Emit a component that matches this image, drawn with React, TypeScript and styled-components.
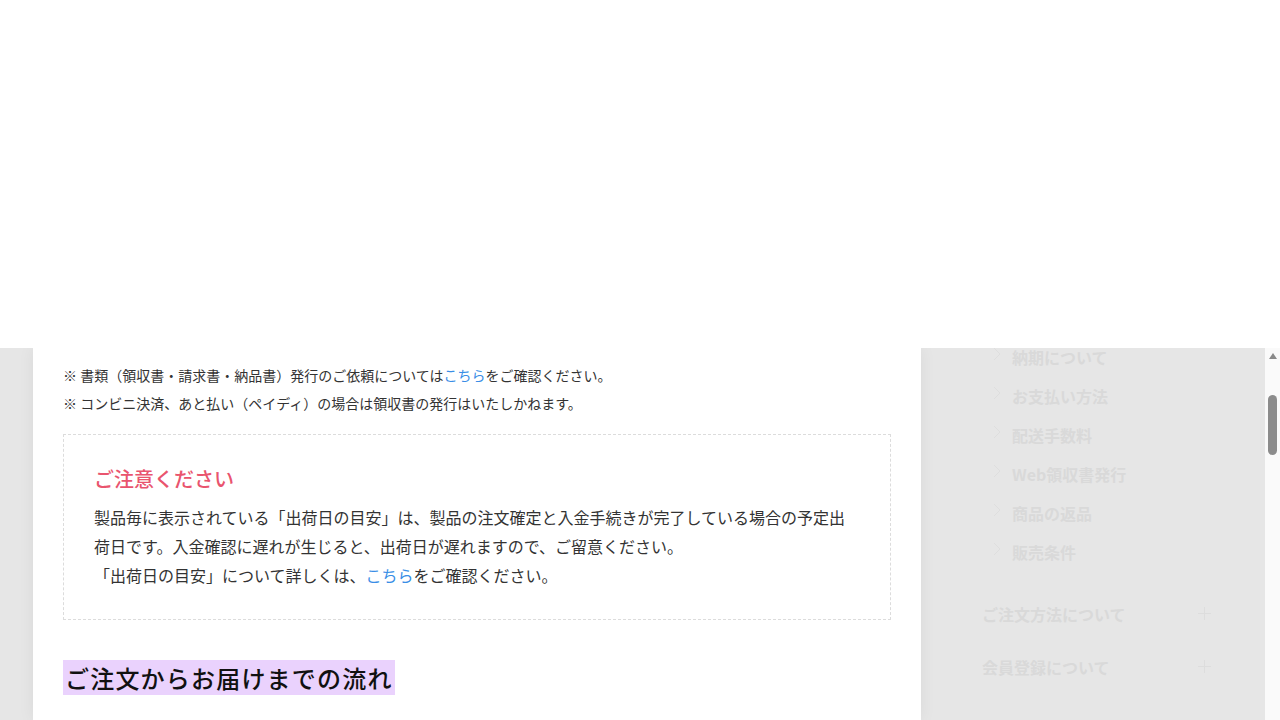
import styled, { createGlobalStyle } from 'styled-components';

const GlobalStyle = createGlobalStyle`
  html, body {
    margin: 0;
    padding: 0;
    height: 100%;
    overflow: hidden;
    background: #fff;
  }
  body {
    font-family: "Noto Sans CJK JP", "Noto Sans", sans-serif;
    color: #333;
  }
`;

const subLinks = ['納期について', 'お支払い方法', '配送手数料', 'Web領収書発行', '商品の返品', '販売条件'];
const groups = ['ご注文方法について', '会員登録について'];

function App() {
  return (
    <>
      <GlobalStyle />
      <Page>
        <TopBlank />
        <Viewport>
          <Content>
            <Card>
              <NoteLine>※ 書類（領収書・請求書・納品書）発行のご依頼については<Link>こちら</Link>をご確認ください。</NoteLine>
              <NoteLine>※ コンビニ決済、あと払い（ペイディ）の場合は領収書の発行はいたしかねます。</NoteLine>

              <NoticeBox>
                <NoticeTitle>ご注意ください</NoticeTitle>
                <NoticeText>
                  製品毎に表示されている「出荷日の目安」は、製品の注文確定と入金手続きが完了している場合の予定出荷日です。入金確認に遅れが生じると、出荷日が遅れますので、ご留意ください。
                  <br />
                  「出荷日の目安」について詳しくは、<Link>こちら</Link>をご確認ください。
                </NoticeText>
              </NoticeBox>

              <SectionTitle><span>ご注文からお届けまでの流れ</span></SectionTitle>
            </Card>

            <Sidebar>
              <SubList>
                {subLinks.map((label) => (
                  <SubItem key={label}>
                    <Chevron viewBox="0 0 8 14" aria-hidden>
                      <path d="M1 1l6 6-6 6" fill="none" stroke="currentColor" strokeWidth="1" />
                    </Chevron>
                    {label}
                  </SubItem>
                ))}
              </SubList>
              <GroupList>
                {groups.map((g) => (
                  <GroupRow key={g}>
                    <span>{g}</span>
                    <Plus viewBox="0 0 14 14" aria-hidden>
                      <path d="M7 0v14M0 7h14" stroke="currentColor" strokeWidth="1" />
                    </Plus>
                  </GroupRow>
                ))}
              </GroupList>
            </Sidebar>
          </Content>

          <ScrollTrack>
            <ArrowUp />
            <Thumb />
          </ScrollTrack>
        </Viewport>
      </Page>
    </>
  );
}

const Page = styled.div`
  height: 100vh;
  display: flex;
  flex-direction: column;
`;

const TopBlank = styled.div`
  height: 348px;
  flex-shrink: 0;
  background: #fff;
`;

const Viewport = styled.div`
  flex: 1;
  display: flex;
  overflow: hidden;
`;

const Content = styled.div`
  flex: 1;
  display: flex;
  align-items: stretch;
  background: #e6e6e6;
  padding-left: 33px;
  overflow: hidden;
`;

const Card = styled.main`
  width: 888px;
  flex-shrink: 0;
  box-sizing: border-box;
  background: #fff;
  padding: 13px 30px 80px;
  box-shadow: 0 0 16px rgba(0, 0, 0, 0.06);
  position: relative;
  z-index: 1;
`;

const NoteLine = styled.p`
  margin: 0;
  font-size: 14px;
  line-height: 28px;
  color: #333;
`;

const Link = styled.a`
  color: #3a8ee6;
  text-decoration: none;
`;

const NoticeBox = styled.section`
  margin-top: 17px;
  border: 1px dashed #dcdcdc;
  padding: 29px 30px 29px;
`;

const NoticeTitle = styled.h3`
  margin: 0 0 9px;
  font-size: 20px;
  font-weight: 500;
  line-height: 30px;
  color: #e9546e;
`;

const NoticeText = styled.p`
  margin: 0;
  font-size: 16px;
  line-height: 29px;
  color: #333;
`;

const SectionTitle = styled.h2`
  margin: 39px 0 0;
  font-size: 24px;
  font-weight: 500;
  line-height: 37px;
  letter-spacing: 0.05em;
  color: #111;
  span {
    background: #ead2fd;
    padding: 0 2px;
  }
`;

const Sidebar = styled.aside`
  flex: 1;
  padding-left: 61px;
  padding-right: 48px;
  color: #d9d9d9;
  font-weight: 700;
  font-size: 16px;
`;

const SubList = styled.ul`
  list-style: none;
  margin: -11px 0 0;
  padding: 0 0 0 11px;
`;

const SubItem = styled.li`
  display: flex;
  align-items: center;
  height: 39px;
  gap: 11px;
`;

const Chevron = styled.svg`
  width: 8px;
  height: 14px;
  color: #dedede;
  margin-top: -6px;
`;

const GroupList = styled.div`
  margin-top: 16px;
`;

const GroupRow = styled.div`
  display: flex;
  align-items: center;
  justify-content: space-between;
  height: 53px;
`;

const Plus = styled.svg`
  width: 13px;
  height: 13px;
  color: #dcdcdc;
  margin-right: 6px;
`;

const ScrollTrack = styled.div`
  width: 15px;
  flex-shrink: 0;
  background: #fafafa;
  display: flex;
  flex-direction: column;
  align-items: center;
`;

const ArrowUp = styled.div`
  margin-top: 5px;
  width: 0;
  height: 0;
  border-left: 4.5px solid transparent;
  border-right: 4.5px solid transparent;
  border-bottom: 6px solid #8a8a8a;
`;

const Thumb = styled.div`
  margin-top: 36px;
  width: 9px;
  height: 60px;
  border-radius: 5px;
  background: #8c8c8c;
`;

export default App;
